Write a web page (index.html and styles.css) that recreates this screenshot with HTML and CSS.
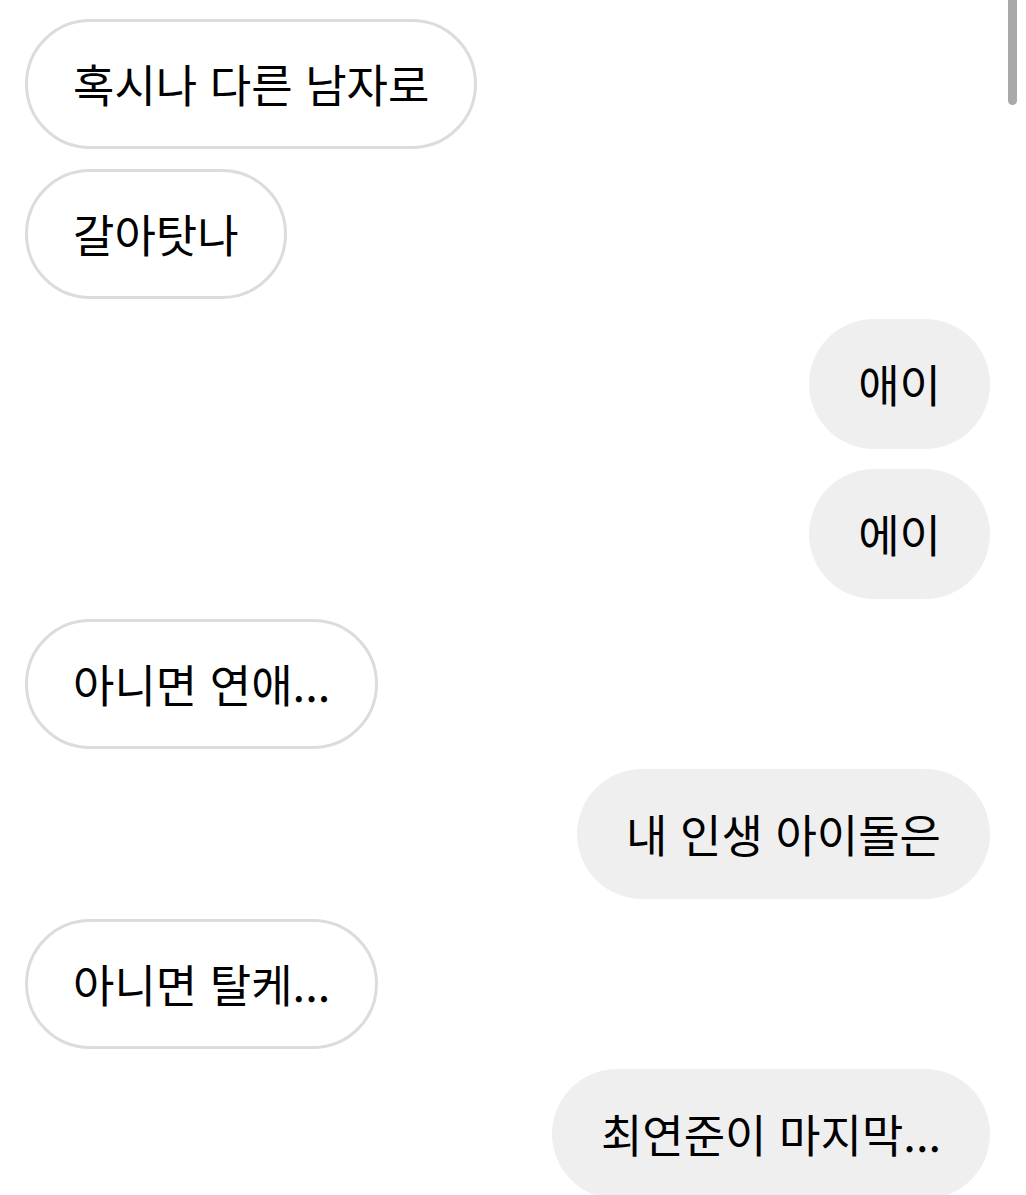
FILE: index.html
```html
<!DOCTYPE html>
<html lang="ko">
<head>
  <meta charset="UTF-8">
  <title>Chat</title>
  <link rel="stylesheet" href="styles.css">
</head>
<body>

<div class="chat">
  <div class="msg them">혹시나 다른 남자로</div>
  <div class="msg them">갈아탓나</div>
  <div class="msg me">애이</div>
  <div class="msg me">에이</div>
  <div class="msg them">아니면 연애...</div>
  <div class="msg me">내 인생 아이돌은</div>
  <div class="msg them">아니면 탈케...</div>
  <div class="msg me">최연준이 마지막...</div>
</div>

<div class="scrollbar"></div>

</body>
</html>
```

FILE: styles.css
```css
body {
  margin: 0;
  background: #fff;
  font-family: "Noto Sans CJK KR", "Noto Sans", sans-serif;
  overflow: hidden;
}

.chat {
  display: flex;
  flex-direction: column;
  gap: 20px;
  padding: 19px 36px 0 25px;
}

.msg {
  box-sizing: border-box;
  height: 130px;
  display: flex;
  align-items: center;
  padding: 0 49px 2px;
  border-radius: 65px;
  font-size: 45px;
  color: #000;
  white-space: nowrap;
}

.them {
  align-self: flex-start;
  background: #fff;
  border: 3px solid #dcdcdc;
  padding: 0 45px 2px;
}

.me {
  align-self: flex-end;
  background: #efefef;
}

.scrollbar {
  position: absolute;
  top: 0;
  right: 9px;
  width: 9px;
  height: 105px;
  background: #a9a9a9;
  border-radius: 0 0 5px 5px;
}
```
